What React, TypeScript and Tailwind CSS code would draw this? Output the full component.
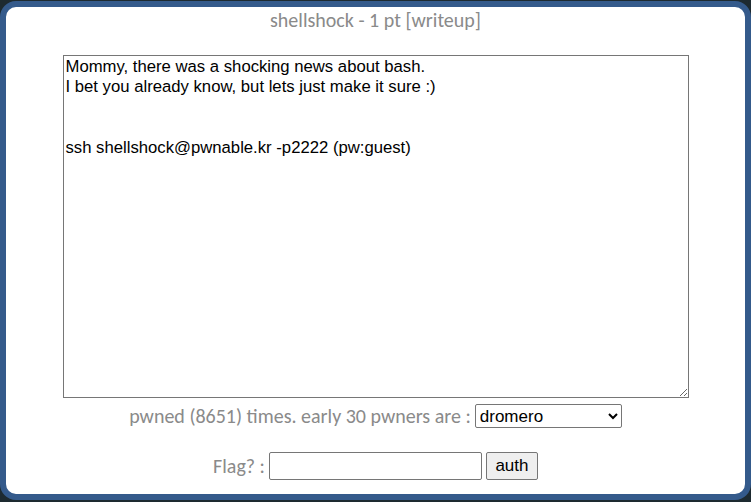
import React from "react";

const intro =
  "Mommy, there was a shocking news about bash.\nI bet you already know, but lets just make it sure :)\n\n\nssh shellshock@pwnable.kr -p2222 (pw:guest)";

const pwners = ["dromero", "rubiya", "daehee", "jinmo123", "hypnosis"];

export default function App() {
  const label =
    "text-[#8a8a8a] font-['Carlito','Liberation_Sans_Narrow','DejaVu_Sans_Condensed',sans-serif] text-[20px] leading-[24px]";

  return (
    <div className="w-[751px] h-[502px] bg-[#1d2a30] pt-px">
      <div className="h-[499px] w-full border-[6px] border-[#345a8b] rounded-[16px] bg-white flex flex-col items-center">
        <div className={`${label} mt-[1px]`}>shellshock - 1 pt [writeup]</div>
        <textarea
          className="mt-[23px] w-[626px] h-[343px] border border-[#767676] px-[2px] py-[1px] text-[16.7px] leading-[20.25px] text-black font-['Liberation_Sans',Arial,sans-serif] outline-none"
          defaultValue={intro}
        />
        <div className="mt-[6px] flex items-center gap-[4px] h-[24px]">
          <span className={label}>pwned (8651) times. early 30 pwners are :</span>
          <select className="w-[147px] h-[24px] border border-[#767676] rounded-[2px] text-[17px] text-black font-['Liberation_Sans',Arial,sans-serif] pl-0 appearance-auto">
            {pwners.map((p) => (
              <option key={p}>{p}</option>
            ))}
          </select>
        </div>
        <div className="mt-[24px] flex items-center gap-[4px] h-[28px]">
          <span className={label}>Flag? :</span>
          <input
            type="text"
            className="w-[213px] h-[28px] border border-[#767676] rounded-[2px] px-[2px] text-[16px] font-['Liberation_Sans',Arial,sans-serif] outline-none"
          />
          <button className="w-[52px] h-[28px] border border-[#767676] rounded-[2px] bg-[#efefef] text-[17px] text-black font-['Liberation_Sans',Arial,sans-serif]">
            auth
          </button>
        </div>
      </div>
    </div>
  );
}
